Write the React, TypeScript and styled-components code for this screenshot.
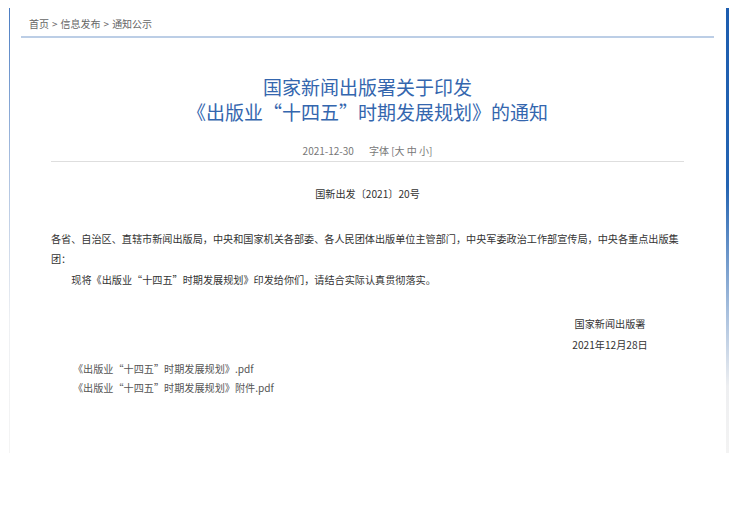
import styled, { createGlobalStyle } from 'styled-components';

const GlobalStyle = createGlobalStyle`
    html, body {
        margin: 0;
        padding: 0;
        background: #ffffff;
    }
    body {
        font-family: "Noto Sans CJK SC", "Noto Sans", sans-serif;
        color: #333333;
    }
`;

const Page = styled.div`
    width: 720px;
    height: 445px;
    margin: 8px auto 0;
    box-sizing: border-box;
    background:
        linear-gradient(to bottom, #4a7cc2 0%, #a9bfdf 35%, #eef0f3 70%, #f4f4f4 100%) left top / 1px 100% no-repeat,
        linear-gradient(to bottom, #1d5daf 0%, #2464b2 40%, #a7bfdd 68%, #eeeff1 85%, #f3f3f3 100%) right top / 3px 100% no-repeat;
`;

const Breadcrumb = styled.div`
    margin: 0 15px 0 12px;
    padding: 10px 8px 6px;
    border-bottom: 2px solid #bccee6;
    font-size: 10px;
    line-height: 12px;
    color: #666666;
`;

const Sep = styled.span`
    margin: 0 3px;
`;

const Article = styled.div`
    margin: 0 45px 0 42px;
`;

const Title = styled.h1`
    margin: 36px 0 0;
    font-size: 19px;
    font-weight: normal;
    line-height: 25px;
    text-align: center;
    color: #3466ae;
`;

const Meta = styled.div`
    margin-top: 17px;
    font-size: 10px;
    line-height: 20px;
    text-align: center;
    color: #777777;
    border-bottom: 1px solid #dedede;
`;

const FontSize = styled.span`
    margin-left: 15px;
`;

const DocNo = styled.div`
    margin-top: 22px;
    font-size: 10.15px;
    line-height: 20px;
    text-align: center;
`;

const Para = styled.p<{ $indent?: boolean; $top: number }>`
    margin: ${p => p.$top}px 0 0;
    font-size: 10.15px;
    line-height: 20px;
    text-indent: ${p => (p.$indent ? '2em' : '0')};
`;

const SignBlock = styled.div`
    margin: 23px 0 0 auto;
    width: 148px;
    font-size: 10.15px;
    line-height: 21px;
    text-align: center;
`;

const Attachments = styled.div`
    margin-top: 4px;
    padding-left: 22px;
    font-size: 10.15px;
    line-height: 19px;
    color: #555555;
`;

const Attachment = styled.div``;

export default function App() {
    return (
        <>
            <GlobalStyle />
            <Page>
                <Breadcrumb>
                    首页<Sep>&gt;</Sep>信息发布<Sep>&gt;</Sep>通知公示
                </Breadcrumb>
                <Article>
                    <Title>
                        国家新闻出版署关于印发
                        <br />
                        《出版业“十四五”时期发展规划》的通知
                    </Title>
                    <Meta>
                        2021-12-30
                        <FontSize>字体 [大 中 小]</FontSize>
                    </Meta>
                    <DocNo>国新出发〔2021〕20号</DocNo>
                    <Para $top={25}>
                        各省、自治区、直辖市新闻出版局，中央和国家机关各部委、各人民团体出版单位主管部门，中央军委政治工作部宣传局，中央各重点出版集团：
                    </Para>
                    <Para $top={1} $indent>
                        现将《出版业“十四五”时期发展规划》印发给你们，请结合实际认真贯彻落实。
                    </Para>
                    <SignBlock>
                        <div>国家新闻出版署</div>
                        <div>2021年12月28日</div>
                    </SignBlock>
                    <Attachments>
                        <Attachment>《出版业“十四五”时期发展规划》.pdf</Attachment>
                        <Attachment>《出版业“十四五”时期发展规划》附件.pdf</Attachment>
                    </Attachments>
                </Article>
            </Page>
        </>
    );
}
